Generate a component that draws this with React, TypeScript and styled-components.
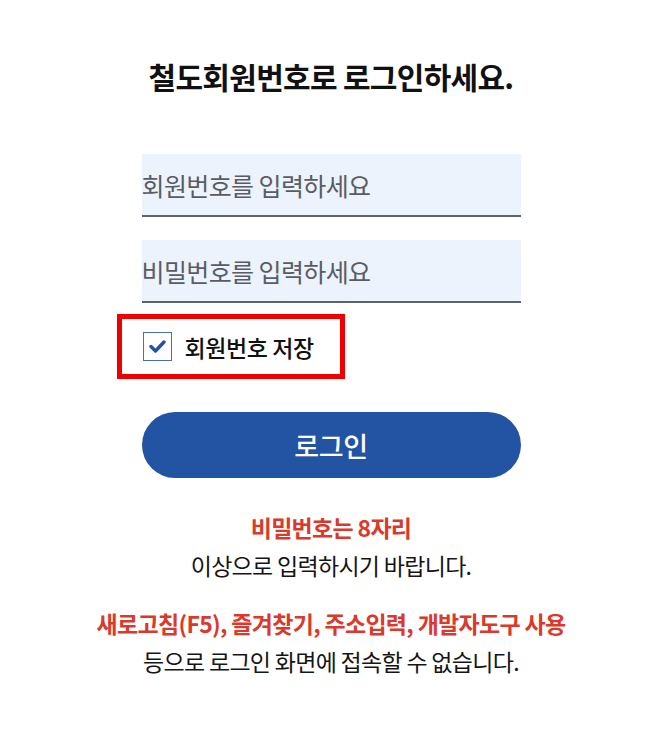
import React from "react";
import styled, { createGlobalStyle } from "styled-components";

const Global = createGlobalStyle`
  html, body { margin: 0; padding: 0; background: #ffffff; }
  body { font-family: "Noto Sans CJK KR", "Noto Sans", sans-serif; color: #111; }
  * { box-sizing: border-box; }
`;

const Page = styled.div`
  width: 666px;
  min-height: 733px;
  padding-top: 57px;
  padding-right: 4px;
  display: flex;
  flex-direction: column;
  align-items: center;
`;

const Title = styled.h1`
  margin: 0;
  font-size: 30px;
  line-height: 38px;
  font-weight: 700;
  letter-spacing: -0.7px;
  color: #111;
  text-align: center;
`;

const Form = styled.div`
  width: 379px;
  display: flex;
  flex-direction: column;
`;

const Field = styled.input<{ $gap: number }>`
  margin-top: ${(p) => p.$gap}px;
  width: 100%;
  height: 63px;
  border: none;
  border-bottom: 2px solid #5d636b;
  background: #ecf3fd;
  padding: 0;
  font-family: inherit;
  font-size: 25px;
  letter-spacing: -0.6px;
  color: #333;
  outline: none;
  &::placeholder { color: #595d63; }
`;

const CheckRow = styled.label`
  margin-top: 11px;
  margin-left: -25px;
  align-self: flex-start;
  display: flex;
  align-items: center;
  gap: 13px;
  height: 65px;
  border: 5px solid #ee0000;
  padding: 0 26px 0 21px;
  cursor: pointer;
`;

const Box = styled.span`
  width: 29px;
  height: 29px;
  border: 1.5px solid #4a6db3;
  background: #fff;
  display: flex;
  align-items: center;
  justify-content: center;
`;

const CheckLabel = styled.span`
  font-size: 23px;
  font-weight: 500;
  letter-spacing: -0.4px;
  color: #111;
`;

const LoginButton = styled.button`
  margin-top: 33px;
  width: 100%;
  height: 66px;
  border: none;
  border-radius: 33px;
  background: #2353a3;
  color: #fff;
  font-family: inherit;
  font-size: 27px;
  font-weight: 500;
  letter-spacing: -0.3px;
  cursor: pointer;
`;

const Notice = styled.div<{ $gap: number }>`
  margin-top: ${(p) => p.$gap}px;
  text-align: center;
  width: 100%;
`;

const NoticeLine = styled.p<{ $red?: boolean }>`
  margin: 0;
  font-size: 23px;
  line-height: 38px;
  letter-spacing: -0.7px;
  font-weight: ${(p) => (p.$red ? 700 : 400)};
  color: ${(p) => (p.$red ? "#d93a2c" : "#151515")};
  white-space: nowrap;
`;

export default function App() {
  return (
    <>
      <Global />
      <Page>
        <Title>철도회원번호로 로그인하세요.</Title>
        <Form>
          <Field $gap={59} placeholder="회원번호를 입력하세요" />
          <Field $gap={23} type="password" placeholder="비밀번호를 입력하세요" />
          <CheckRow>
            <Box>
              <svg width="17" height="13" viewBox="0 0 17 13">
                <path d="M2 6.5 L6.5 11 L15 2" fill="none" stroke="#24549f" strokeWidth="3.4" strokeLinecap="round" strokeLinejoin="round" />
              </svg>
            </Box>
            <CheckLabel>회원번호 저장</CheckLabel>
          </CheckRow>
          <LoginButton>로그인</LoginButton>
        </Form>
        <Notice $gap={30}>
          <NoticeLine $red>비밀번호는 8자리</NoticeLine>
          <NoticeLine>이상으로 입력하시기 바랍니다.</NoticeLine>
        </Notice>
        <Notice $gap={20}>
          <NoticeLine $red>새로고침(F5), 즐겨찾기, 주소입력, 개발자도구 사용</NoticeLine>
          <NoticeLine>등으로 로그인 화면에 접속할 수 없습니다.</NoticeLine>
        </Notice>
      </Page>
    </>
  );
}
